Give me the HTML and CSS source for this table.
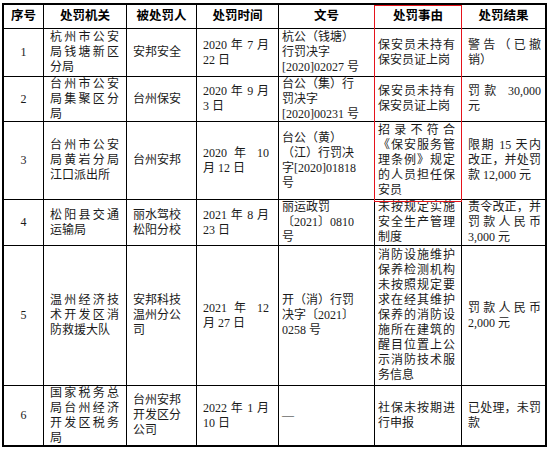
FILE: index.html
```html
<!DOCTYPE html>
<html lang="zh-CN">
<head>
<meta charset="utf-8">
<title>处罚记录</title>
<link rel="stylesheet" href="styles.css">
</head>
<body>
<div class="wrap">
  <div class="grid">
    <div class="c h">序号</div>
    <div class="c h">处罚机关</div>
    <div class="c h">被处罚人</div>
    <div class="c h">处罚时间</div>
    <div class="c h">文号</div>
    <div class="c h">处罚事由</div>
    <div class="c h last">处罚结果</div>

    <div class="c n">1</div>
    <div class="c a">杭州市公安局钱塘新区分局</div>
    <div class="c p">安邦安全</div>
    <div class="c d">2020 年 7 月 22 日</div>
    <div class="c w">杭公（钱塘）行罚决字[2020]02027 号</div>
    <div class="c r">保安员未持有保安员证上岗</div>
    <div class="c s last">警告（已撤销）</div>

    <div class="c n">2</div>
    <div class="c a">台州市公安局集聚区分局</div>
    <div class="c p">台州保安</div>
    <div class="c d">2020 年 9 月 3 日</div>
    <div class="c w">台公（集）行罚决字[2020]00231 号</div>
    <div class="c r">保安员未持有保安员证上岗</div>
    <div class="c s last">罚款 30,000 元</div>

    <div class="c n">3</div>
    <div class="c a">台州市公安局黄岩分局江口派出所</div>
    <div class="c p">台州安邦</div>
    <div class="c d">2020 年 10 月 12 日</div>
    <div class="c w">台公（黄）（江）行罚决字[2020]01818 号</div>
    <div class="c r">招录不符合《保安服务管理条例》规定的人员担任保安员</div>
    <div class="c s last">限期 15 天内改正，并处罚款 12,000 元</div>

    <div class="c n">4</div>
    <div class="c a">松阳县交通运输局</div>
    <div class="c p">丽水驾校松阳分校</div>
    <div class="c d">2021 年 8 月 23 日</div>
    <div class="c w">丽运政罚〔2021〕0810 号</div>
    <div class="c r">未按规定实施安全生产管理制度</div>
    <div class="c s last">责令改正，并罚款人民币 3,000 元</div>

    <div class="c n">5</div>
    <div class="c a">温州经济技术开发区消防救援大队</div>
    <div class="c p">安邦科技温州分公司</div>
    <div class="c d">2021 年 12 月 27 日</div>
    <div class="c w">开（消）行罚决字〔2021〕0258 号</div>
    <div class="c r">消防设施维护保养检测机构未按照规定要求在经其维护保养的消防设施所在建筑的醒目位置上公示消防技术服务信息</div>
    <div class="c s last">罚款人民币 2,000 元</div>

    <div class="c n bot">6</div>
    <div class="c a bot">国家税务总局台州经济开发区税务局</div>
    <div class="c p bot">台州安邦开发区分公司</div>
    <div class="c d bot">2022 年 1 月 10 日</div>
    <div class="c w bot">—</div>
    <div class="c r bot">社保未按期进行申报</div>
    <div class="c s last bot">已处理，未罚款</div>
  </div>
  <div class="mark"></div>
</div>
</body>
</html>
```
FILE: styles.css
```css
html, body {
  margin: 0;
  padding: 0;
  background: #fff;
}
body {
  font-family: "Liberation Serif", "Noto Sans CJK SC", serif;
  font-size: 12px;
  line-height: 15px;
  color: #1a1a1a;
}
.wrap {
  position: relative;
  padding: 3px 0 0 2px;
}
.grid {
  display: grid;
  width: 541px;
  grid-template-columns: 40px 83px 70px 82px 96px 87px 83px;
  grid-template-rows: 24px 48px 45px 78px 46px 140px 59px;
  border: 2px solid #000;
}
.c {
  display: flex;
  flex-direction: column;
  justify-content: center;
  border-right: 1px solid #000;
  border-bottom: 1px solid #000;
  text-align: justify;
  overflow: visible;
  min-width: 0;
}
.last { border-right: none; }
.bot { border-bottom: none; }
.h {
  text-align: center;
  font-weight: bold;
  font-size: 12.5px;
  color: #000;
}
.n { text-align: center; }
.a { padding: 0 7px 0 6px; }
.p { padding: 0 7px 0 6px; text-align: left; }
.d { padding: 0 9px 0 6px; }
.w { padding: 0 11px 0 3px; text-align: left; }
.r { padding: 0 6px 0 3px; }
.s { padding: 0 4px 0 6px; }
.mark {
  position: absolute;
  left: 374px;
  top: 5px;
  width: 86px;
  height: 195px;
  border: 1px solid #e5131b;
  pointer-events: none;
}
```
